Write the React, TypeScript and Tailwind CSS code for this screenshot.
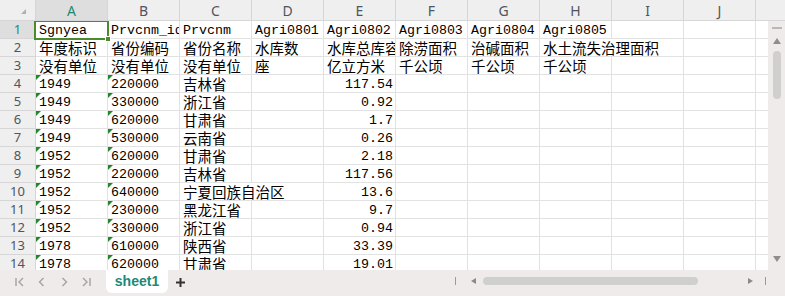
import React from "react";

const COLS = ["A", "B", "C", "D", "E", "F", "G", "H", "I", "J"];

const rows: string[][] = [
  ["Sgnyea", "Prvcnm_id", "Prvcnm", "Agri0801", "Agri0802", "Agri0803", "Agri0804", "Agri0805", "", ""],
  ["年度标识", "省份编码", "省份名称", "水库数", "水库总库容", "除涝面积", "治碱面积", "水土流失治理面积", "", ""],
  ["没有单位", "没有单位", "没有单位", "座", "亿立方米", "千公顷", "千公顷", "千公顷", "", ""],
  ["1949", "220000", "吉林省", "", "117.54", "", "", "", "", ""],
  ["1949", "330000", "浙江省", "", "0.92", "", "", "", "", ""],
  ["1949", "620000", "甘肃省", "", "1.7", "", "", "", "", ""],
  ["1949", "530000", "云南省", "", "0.26", "", "", "", "", ""],
  ["1952", "620000", "甘肃省", "", "2.18", "", "", "", "", ""],
  ["1952", "220000", "吉林省", "", "117.56", "", "", "", "", ""],
  ["1952", "640000", "宁夏回族自治区", "", "13.6", "", "", "", "", ""],
  ["1952", "230000", "黑龙江省", "", "9.7", "", "", "", "", ""],
  ["1952", "330000", "浙江省", "", "0.94", "", "", "", "", ""],
  ["1978", "610000", "陕西省", "", "33.39", "", "", "", "", ""],
  ["1978", "620000", "甘肃省", "", "19.01", "", "", "", "", ""],
];

const overflowCells = new Set(["1-7", "9-2"]);

function Cell({ v, r, c }: { v: string; r: number; c: number }) {
  const cjk = /[\u4e00-\u9fff]/.test(v);
  const right = r >= 3 && c === 4;
  const tri = r >= 3 && (c === 0 || c === 1);
  const over = overflowCells.has(`${r}-${c}`);
  return (
    <div
      className={
        "relative h-[18px] w-[72px] shrink-0 border-b border-[#e2e2e2] flex items-center whitespace-nowrap text-black " +
        (over ? "overflow-visible " : "overflow-hidden border-r ") +
        (right ? "justify-end pr-[2px] " : "pl-[3px] ")
      }
    >
      {tri && (
        <div className="absolute left-0 top-0 h-0 w-0 border-t-[5px] border-r-[5px] border-t-[#1f8a2a] border-r-transparent" />
      )}
      {v && (
        <span
          className={
            cjk
              ? "text-[14.5px] leading-[17px] [font-family:'Noto_Sans_CJK_SC',sans-serif]"
              : "text-[13.3px] leading-[17px] pt-[1px] [font-family:'Liberation_Mono',monospace]"
          }
        >
          {v}
        </span>
      )}
    </div>
  );
}

function NavIcon({ kind }: { kind: "first" | "prev" | "next" | "last" }) {
  return (
    <svg width="10" height="10" viewBox="0 0 10 10" className="shrink-0">
      {kind === "first" && (
        <>
          <line x1="1" y1="1" x2="1" y2="9" stroke="#a3a3a3" strokeWidth="1.4" />
          <polyline points="8,1 4,5 8,9" fill="none" stroke="#a3a3a3" strokeWidth="1.4" />
        </>
      )}
      {kind === "prev" && <polyline points="6.5,1 2.5,5 6.5,9" fill="none" stroke="#a3a3a3" strokeWidth="1.4" />}
      {kind === "next" && <polyline points="3.5,1 7.5,5 3.5,9" fill="none" stroke="#a3a3a3" strokeWidth="1.4" />}
      {kind === "last" && (
        <>
          <polyline points="2,1 6,5 2,9" fill="none" stroke="#a3a3a3" strokeWidth="1.4" />
          <line x1="9" y1="1" x2="9" y2="9" stroke="#a3a3a3" strokeWidth="1.4" />
        </>
      )}
    </svg>
  );
}

export default function App() {
  return (
    <div className="w-[785px] h-[296px] flex flex-col bg-white overflow-hidden [font-family:'Noto_Sans',sans-serif]">
      {/* column header */}
      <div className="flex h-[21px] shrink-0 bg-[#efefef]">
        <div className="relative w-[36px] h-[21px] shrink-0 border-r border-b border-[#d6d6d6]">
          <div className="absolute right-[9px] bottom-[6px] h-0 w-0 border-b-[5px] border-l-[5px] border-b-[#b0b0b0] border-l-transparent" />
        </div>
        {COLS.map((c, i) => (
          <div
            key={c}
            className={
              "w-[72px] h-[21px] shrink-0 border-r border-b border-[#d6d6d6] flex items-center justify-center text-[14px] " +
              (i === 0 ? "bg-[#dedede] text-[#1f8a6e]" : "text-[#4f5560]")
            }
          >
            {c}
          </div>
        ))}
        <div className="flex-1 h-[21px] border-b border-[#d6d6d6]" />
      </div>

      {/* body */}
      <div className="flex h-[249px] shrink-0">
        <div className="relative w-[768px] flex flex-col overflow-hidden">
          {rows.map((row, r) => (
            <div key={r} className="flex shrink-0">
              <div
                className={
                  "w-[36px] h-[18px] shrink-0 border-r border-b border-[#d6d6d6] flex items-center justify-center text-[13px] " +
                  (r === 0 ? "bg-[#dedede] text-[#1f8a6e]" : "bg-[#efefef] text-[#4f5560]")
                }
              >
                {r + 1}
              </div>
              {row.map((v, c) => (
                <Cell key={c} v={v} r={r} c={c} />
              ))}
              <div className="flex-1 h-[18px] border-b border-[#e2e2e2]" />
            </div>
          ))}
          {/* selection box */}
          <div className="absolute left-[34px] top-[-1px] w-[75px] h-[20px] border-2 border-[#4a8c2c] pointer-events-none">
            <div className="absolute right-[-4px] bottom-[-4px] w-[6px] h-[6px] bg-[#4a8c2c] border border-white" />
          </div>
        </div>
        {/* vertical scrollbar */}
        <div className="w-[17px] bg-[#eeebea] flex flex-col items-center">
          <div className="mt-[6px] w-[10px] h-[2px] bg-[#b8b8b8]" />
          <svg width="8" height="6" viewBox="0 0 8 6" className="mt-[9px]">
            <polygon points="4,0 8,6 0,6" fill="#8e8e8e" />
          </svg>
          <div className="mt-[7px] w-[8px] h-[48px] rounded-full bg-[#d0cece]" />
          <svg width="8" height="6" viewBox="0 0 8 6" className="mt-auto mb-[8px]">
            <polygon points="0,0 8,0 4,6" fill="#8e8e8e" />
          </svg>
        </div>
      </div>

      {/* bottom bar */}
      <div className="flex-1 flex bg-[#efebea] items-center">
        <div className="flex items-center ml-[15px] gap-[12px] mt-[-2px]">
          <NavIcon kind="first" />
          <NavIcon kind="prev" />
          <NavIcon kind="next" />
          <NavIcon kind="last" />
        </div>
        <div className="self-start ml-[15px] w-[62px] h-[23px] bg-white rounded-b-[6px] flex items-center justify-center">
          <span className="text-[14px] font-bold text-[#1a8a7a] [font-family:'Liberation_Sans',sans-serif]">sheet1</span>
        </div>
        <svg width="11" height="11" viewBox="0 0 11 11" className="ml-[7px] mt-[-1px]">
          <line x1="5.5" y1="1" x2="5.5" y2="10" stroke="#333" strokeWidth="2" />
          <line x1="1" y1="5.5" x2="10" y2="5.5" stroke="#333" strokeWidth="2" />
        </svg>
        <div className="ml-auto mr-[19px] w-[311px] flex items-center mt-[-4px]">
          <div className="w-[1px] h-[8px] bg-[#9a9a9a]" />
          <svg width="5" height="6" viewBox="0 0 5 6" className="ml-[15px]">
            <polygon points="5,0 5,6 0,3" fill="#8a8a8a" />
          </svg>
          <div className="ml-[7px] w-[215px] h-[8px] rounded-full bg-[#d0cfcf]" />
          <svg width="5" height="6" viewBox="0 0 5 6" className="ml-auto">
            <polygon points="0,0 0,6 5,3" fill="#8a8a8a" />
          </svg>
          <div className="ml-[12px] w-[1px] h-[8px] bg-[#9a9a9a]" />
        </div>
      </div>
    </div>
  );
}
